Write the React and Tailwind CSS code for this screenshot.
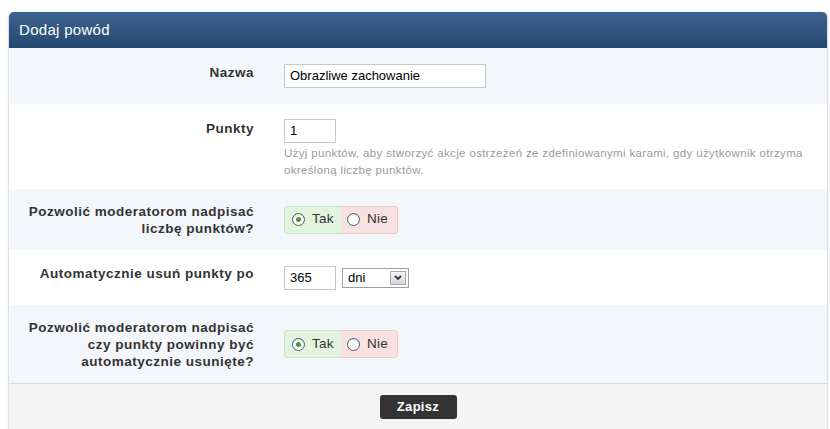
import React from "react";

function Radio({ checked }) {
  return (
    <span className="relative inline-block w-[13px] h-[13px] rounded-full border border-[#4a5a70] bg-white shadow-[inset_0_1px_1px_rgba(0,0,0,0.15)]">
      {checked && (
        <span className="absolute left-[3px] top-[3px] w-[5px] h-[5px] rounded-full bg-[#3c9a3c]" />
      )}
    </span>
  );
}

function YesNo() {
  return (
    <div className="flex h-[28px] w-[114px] text-[13.5px] text-[#333] tracking-[0.2px]">
      <div className="flex items-center gap-[7px] w-[57px] pl-[7px] bg-[#e2f4df] border border-r-0 border-[#c6e6c0] rounded-l-[4px]">
        <Radio checked />
        <span>Tak</span>
      </div>
      <div className="flex items-center gap-[7px] w-[57px] pl-[6px] bg-[#f8e1e1] border border-l-0 border-[#ecc9c9] rounded-r-[4px]">
        <Radio />
        <span>Nie</span>
      </div>
    </div>
  );
}

function Label({ children, className = "" }) {
  return (
    <div className={"w-[245px] shrink-0 text-right font-bold text-[13.5px] leading-[17px] text-[#333] tracking-[0.5px] " + className}>
      {children}
    </div>
  );
}

export default function App() {
  return (
    <div className="w-[830px] h-[429px] bg-white pt-[12px] pl-[8px] pr-[2px] overflow-hidden" style={{ fontFamily: '"Liberation Sans", Arial, sans-serif' }}>
      <div className="border-l border-r border-[#dcdfe3] rounded-t-[5px] shadow-[0_0_2px_rgba(0,0,0,0.15)]">
        <div className="h-[36px] flex items-center pl-[10px] rounded-t-[5px] bg-gradient-to-b from-[#3c6490] to-[#264870] text-white text-[15px] tracking-[0.3px]">
          Dodaj powód
        </div>

        <div className="flex items-center h-[56px] bg-[#f3f6fa]">
          <Label className="pb-[8px]">Nazwa</Label>
          <div className="pl-[30px]">
            <div className="w-[202px] h-[24px] border border-[#c8c8c8] bg-white flex items-center pl-[5px] text-[13px] text-black">
              Obrazliwe zachowanie
            </div>
          </div>
        </div>

        <div className="flex items-start h-[85px] bg-white pt-[15px]">
          <Label className="pt-[1px]">Punkty</Label>
          <div className="pl-[30px] w-[560px]">
            <div className="w-[52px] h-[24px] border border-[#c8c8c8] bg-white flex items-center pl-[5px] text-[13px] text-black">
              1
            </div>
            <div className="mt-[2px] text-[11.5px] leading-[17px] text-[#9a9a9a] tracking-[0.35px]">
              Użyj punktów, aby stworzyć akcje ostrzeżeń ze zdefiniowanymi karami, gdy użytkownik otrzyma określoną liczbę punktów.
            </div>
          </div>
        </div>

        <div className="flex items-center h-[61px] bg-[#f3f6fa]">
          <Label>
            Pozwolić moderatorom nadpisać
            <br />
            liczbę punktów?
          </Label>
          <div className="pl-[30px]">
            <YesNo />
          </div>
        </div>

        <div className="flex items-center h-[55px] bg-white">
          <Label className="pb-[8px]">Automatycznie usuń punkty po</Label>
          <div className="pl-[30px] flex items-center gap-[6px]">
            <div className="w-[52px] h-[24px] border border-[#c8c8c8] bg-white flex items-center pl-[5px] text-[13px] text-black">
              365
            </div>
            <div className="w-[67px] h-[20px] border border-[#a0a0a0] bg-white flex items-center justify-between pl-[5px] pr-[2px] text-[13px] text-black">
              <span>dni</span>
              <span className="w-[16px] h-[14px] border border-[#a8a8b0] bg-gradient-to-b from-[#f4f4f6] to-[#d4d4dc] flex items-center justify-center">
                <svg width="8" height="6" viewBox="0 0 8 6">
                  <path d="M1 1 L4 4 L7 1" stroke="#333" strokeWidth="1.8" fill="none" />
                </svg>
              </span>
            </div>
          </div>
        </div>

        <div className="flex items-center h-[79px] bg-[#f3f6fa] border-b border-[#d8dadd]">
          <Label>
            Pozwolić moderatorom nadpisać
            <br />
            czy punkty powinny być
            <br />
            automatycznie usunięte?
          </Label>
          <div className="pl-[30px]">
            <YesNo />
          </div>
        </div>

        <div className="flex justify-center h-[60px] bg-[#f5f5f5] pt-[11px]">
          <button className="w-[77px] h-[24px] rounded-[3px] bg-[#333] text-white font-bold text-[13px] tracking-[0.3px]">
            Zapisz
          </button>
        </div>
      </div>
    </div>
  );
}
